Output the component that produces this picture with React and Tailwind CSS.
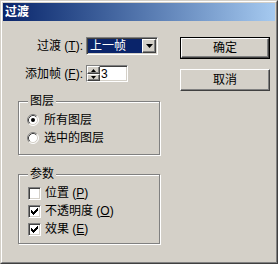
import React from 'react'

const sunken = "border border-t-[#808080] border-l-[#808080] border-r-white border-b-white shadow-[inset_1px_1px_0_#404040,inset_-1px_-1px_0_#d4d0c8]";
const raised = "border border-t-white border-l-white border-r-[#404040] border-b-[#404040] shadow-[inset_-1px_-1px_0_#808080]";

function Radio({ checked }) {
  return (
    <svg width="12" height="12" viewBox="0 0 12 12" className="shrink-0">
      <circle cx="6" cy="6" r="5" fill="#fff" />
      <path d="M2.11 9.89A5.5 5.5 0 0 1 9.89 2.11" fill="none" stroke="#808080" />
      <path d="M9.89 2.11A5.5 5.5 0 0 1 2.11 9.89" fill="none" stroke="#fff" />
      <path d="M2.82 9.18A4.5 4.5 0 0 1 9.18 2.82" fill="none" stroke="#404040" />
      <path d="M9.18 2.82A4.5 4.5 0 0 1 2.82 9.18" fill="none" stroke="#d4d0c8" />
      {checked && <circle cx="6" cy="6" r="2" fill="#000" />}
    </svg>
  );
}

function Check({ checked }) {
  return (
    <div className={`w-[13px] h-[13px] bg-white shrink-0 ${sunken}`}>
      {checked && (
        <svg width="11" height="11" viewBox="1 1 11 11" shapeRendering="crispEdges">
          <path d="M3.5 5v3M4.5 6v3M5.5 7v3M6.5 6v3M7.5 5v3M8.5 4v3M9.5 3v3" stroke="#000" />
        </svg>
      )}
    </div>
  );
}

function Button({ children, isDefault }) {
  const inner = (
    <div className={`h-full flex items-center justify-center bg-[#d4d0c8] ${raised}`}>
      {children}
    </div>
  );
  return (
    <div className={`w-[90px] h-[22px] ${isDefault ? "border border-black" : ""}`}>
      {inner}
    </div>
  );
}

function Group({ title, children, className }) {
  return (
    <fieldset className={`border border-[#808080] shadow-[1px_1px_0_#fff,inset_1px_1px_0_#fff] pl-[9px] ${className}`}>
      <legend className="px-[2px] leading-[14px] bg-[#d4d0c8]">{title}</legend>
      {children}
    </fieldset>
  );
}

export default function App() {
  return (
    <div className="w-[278px] h-[264px] bg-[#d4d0c8] border border-t-[#d4d0c8] border-l-[#d4d0c8] border-r-[#404040] border-b-[#404040] text-[12px] text-black font-['Liberation_Sans','Noto_Sans_CJK_SC',sans-serif]">
      <div className="h-full border border-t-white border-l-white border-r-[#808080] border-b-[#808080] p-px flex flex-col">
        <div className="h-[18px] bg-linear-to-r from-[#0a246a] to-[#a6caf0] flex items-center pl-[2px] text-white font-bold leading-none">
          过渡
        </div>

        <div className="flex pt-[16px] pl-[15px]">
          <div className="w-[142px] flex flex-col">
            <div className="flex items-center h-[18px]">
              <div className="w-[65px] text-right whitespace-nowrap">过渡 (<u>T</u>):</div>
              <div className={`ml-[3px] w-[72px] h-[18px] bg-white flex p-px ${sunken}`}>
                <div className="flex-1 bg-[#0a246a] text-white flex items-center pl-[2px] leading-none">上一帧</div>
                <div className={`w-[14px] bg-[#d4d0c8] flex items-center justify-center ${raised}`}>
                  <svg width="7" height="4" viewBox="0 0 7 4"><path d="M0 0h7L3.5 4z" fill="#000" /></svg>
                </div>
              </div>
            </div>

            <div className="flex items-center h-[17px] mt-[10px]">
              <div className="w-[65px] text-right whitespace-nowrap">添加帧 (<u>F</u>):</div>
              <div className={`ml-[3px] w-[42px] h-[17px] bg-white flex ${sunken}`}>
                <div className="w-[13px] flex flex-col bg-[#d4d0c8]">
                  <div className={`h-[8px] flex items-center justify-center ${raised}`}>
                    <svg width="5" height="3" viewBox="0 0 5 3"><path d="M2.5 0L5 3H0z" fill="#000" /></svg>
                  </div>
                  <div className={`flex-1 flex items-center justify-center ${raised}`}>
                    <svg width="5" height="3" viewBox="0 0 5 3"><path d="M0 0h5L2.5 3z" fill="#000" /></svg>
                  </div>
                </div>
                <div className="flex-1 flex items-center pl-px leading-none">3</div>
              </div>
            </div>

            <Group title="图层" className="mt-[12px] pt-[3px] pb-[7px]">
              <div className="flex items-center h-[18px] gap-[5px] -ml-px">
                <Radio checked />
                <span>所有图层</span>
              </div>
              <div className="flex items-center h-[18px] gap-[5px] -ml-px">
                <Radio />
                <span>选中的图层</span>
              </div>
            </Group>

            <Group title="参数" className="mt-[12px] pt-[3px] pb-[5px]">
              <div className="flex items-center h-[18px] gap-[4px]">
                <Check />
                <span>位置 (<u>P</u>)</span>
              </div>
              <div className="flex items-center h-[18px] gap-[4px]">
                <Check checked />
                <span>不透明度 (<u>O</u>)</span>
              </div>
              <div className="flex items-center h-[18px] gap-[4px]">
                <Check checked />
                <span>效果 (<u>E</u>)</span>
              </div>
            </Group>
          </div>

          <div className="ml-[20px] flex flex-col gap-[10px]">
            <Button isDefault>确定</Button>
            <Button>取消</Button>
          </div>
        </div>
      </div>
    </div>
  );
}
